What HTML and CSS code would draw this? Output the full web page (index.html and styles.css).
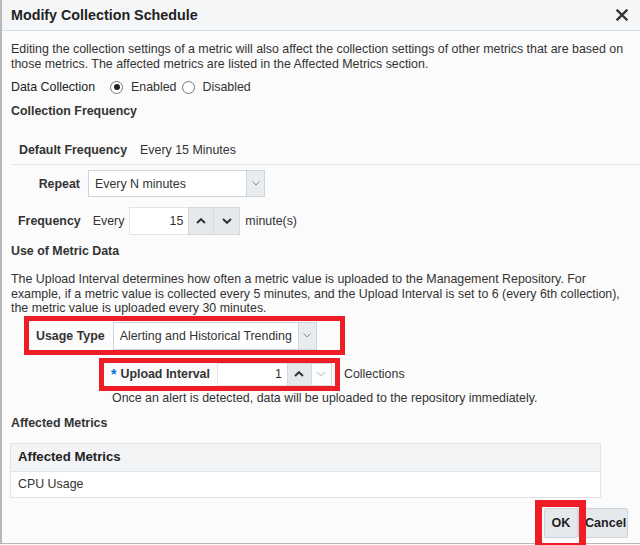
FILE: index.html
```html
<!DOCTYPE html>
<html>
<head>
<meta charset="utf-8">
<link rel="stylesheet" href="styles.css">
</head>
<body>
<div class="dialog">
  <div class="header">
    <div class="title">Modify Collection Schedule</div>
    <svg class="close" width="12" height="12" viewBox="0 0 12 12"><path d="M1.5 1.5 L10.5 10.5 M10.5 1.5 L1.5 10.5" stroke="#333" stroke-width="2.4" stroke-linecap="square"/></svg>
  </div>
  <div class="content">
    <p class="para intro">Editing the collection settings of a metric will also affect the collection settings of other metrics that are based on those metrics. The affected metrics are listed in the Affected Metrics section.</p>
    <div class="row dc">
      <span class="dc-label">Data Collection</span>
      <span class="radio on"></span><span class="rlabel">Enabled</span>
      <span class="radio"></span><span class="rlabel">Disabled</span>
    </div>
    <div class="row section">Collection Frequency</div>
    <div class="row deffreq">
      <span class="bold">Default Frequency</span>
      <span class="defval">Every 15 Minutes</span>
    </div>
    <div class="row repeat">
      <span class="bold lab">Repeat</span>
      <div class="select sel-repeat">
        <span class="sel-text">Every N minutes</span>
        <span class="sel-btn"><svg width="8" height="5" viewBox="0 0 8 5"><path d="M0.5 0.5 L4 4 L7.5 0.5" fill="none" stroke="#8a8a8a" stroke-width="1"/></svg></span>
      </div>
    </div>
    <div class="row freq">
      <span class="bold lab-freq">Frequency</span>
      <span class="every">Every</span>
      <div class="spin">
        <span class="spin-input">15</span>
        <span class="spin-btn"><svg width="10" height="6" viewBox="0 0 10 6"><path d="M1 5 L5 1.2 L9 5" fill="none" stroke="#333" stroke-width="2"/></svg></span>
        <span class="spin-btn"><svg width="10" height="6" viewBox="0 0 10 6"><path d="M1 1 L5 4.8 L9 1" fill="none" stroke="#333" stroke-width="2"/></svg></span>
      </div>
      <span class="unit">minute(s)</span>
    </div>
    <div class="row section">Use of Metric Data</div>
    <p class="para upload">The Upload Interval determines how often a metric value is uploaded to the Management Repository. For example, if a metric value is collected every 5 minutes, and the Upload Interval is set to 6 (every 6th collection), the metric value is uploaded every 30 minutes.</p>
    <div class="row usage">
      <span class="bold lab-usage">Usage Type</span>
      <div class="select sel-usage">
        <span class="sel-text">Alerting and Historical Trending</span>
        <span class="sel-btn"><svg width="8" height="5" viewBox="0 0 8 5"><path d="M0.5 0.5 L4 4 L7.5 0.5" fill="none" stroke="#8a8a8a" stroke-width="1"/></svg></span>
      </div>
    </div>
    <div class="row interval">
      <span class="req">*</span><span class="bold">Upload Interval</span>
      <div class="spin spin-small">
        <span class="spin-input">1</span>
        <span class="spin-btn"><svg width="10" height="6" viewBox="0 0 10 6"><path d="M1 5 L5 1.2 L9 5" fill="none" stroke="#333" stroke-width="2"/></svg></span>
        <span class="spin-btn disabled"><svg width="10" height="6" viewBox="0 0 10 6"><path d="M1 1 L5 4.8 L9 1" fill="none" stroke="#cfd3d6" stroke-width="1.4"/></svg></span>
      </div>
      <span class="unit">Collections</span>
    </div>
    <div class="note">Once an alert is detected, data will be uploaded to the repository immediately.</div>
    <div class="row section aff">Affected Metrics</div>
    <div class="table">
      <div class="th">Affected Metrics</div>
      <div class="td">CPU Usage</div>
    </div>
    <div class="buttons">
      <span class="btn btn-ok">OK</span>
      <span class="btn btn-cancel">Cancel</span>
    </div>
  </div>
  <div class="mark mark-usage"></div>
  <div class="mark mark-interval"></div>
  <div class="mark mark-ok"></div>
</div>
</body>
</html>
```
FILE: styles.css
```css
* { box-sizing: border-box; }
html, body { margin: 0; padding: 0; }
body {
  width: 640px;
  height: 545px;
  overflow: hidden;
  font-family: "Liberation Sans", Arial, sans-serif;
  font-size: 12.4px;
  color: #333;
  background: #fbfbfb;
}
.dialog {
  position: relative;
  width: 640px;
  height: 544px;
  border-left: 2px solid #b8b8b8;
  border-bottom: 1px solid #b8b8b8;
  background: #fbfbfb;
}
.header {
  height: 31px;
  background: #f5f6f7;
  border-bottom: 1px solid #d6dde3;
  display: flex;
  align-items: center;
  justify-content: space-between;
  padding: 0 12px 0 9px;
}
.title {
  font-weight: bold;
  font-size: 14.3px;
  color: #1f1f1f;
  padding-bottom: 1px;
}
.close { display: block; margin-top: -1px; }
.content { padding: 0 0 0 9px; }
.para { margin: 0; line-height: 14.5px; }
.intro { margin-top: 11px; width: 620px; }
.row { display: flex; align-items: center; }
.bold { font-weight: bold; }
.dc { height: 20px; margin-top: 6px; }
.dc-label { margin-right: 15px; color: #222; }
.radio {
  width: 13px; height: 13px;
  border: 1px solid #777;
  border-radius: 50%;
  background: #fff;
  position: relative;
  margin-right: 8px;
}
.radio.on::after {
  content: "";
  position: absolute;
  left: 2.5px; top: 2.5px;
  width: 6px; height: 6px;
  border-radius: 50%;
  background: #222;
}
.rlabel { margin-right: 5px; }
.section { font-weight: bold; height: 20px; margin-top: 4px; }
.deffreq {
  height: 30px;
  margin-top: 14px;
  padding-left: 7px;
  border-bottom: 1px solid #dfe4e8;
  margin-left: 1px;
}
.defval { margin-left: 13px; }
.repeat { margin-top: 5px; height: 27px; }
.lab { width: 69px; text-align: right; margin-right: 8px; }
.select {
  display: flex;
  height: 27px;
  background: #fff;
  border: 1px solid #cdd5dc;
}
.sel-text { flex: 1; padding-left: 6px; display: flex; align-items: center; }
.sel-btn {
  width: 18px;
  background: #e9ecee;
  border-left: 1px solid #cdd5dc;
  display: flex; align-items: center; justify-content: center;
}
.sel-repeat { width: 177px; }
.freq { margin-top: 10px; height: 28px; }
.lab-freq { margin-left: 7px; }
.every { margin-left: 12px; margin-right: 5px; }
.spin { display: flex; height: 28px; }
.spin-input {
  width: 59px;
  background: #fff;
  border: 1px solid #e1e5e8;
  border-right: none;
  display: flex; align-items: center; justify-content: flex-end;
  padding-right: 5px;
}
.spin-btn {
  width: 26px;
  background: #e6e9ec;
  border: 1px solid #d1d8de;
  display: flex; align-items: center; justify-content: center;
}
.spin-btn + .spin-btn { border-left: none; }
.unit { margin-left: 5px; }
.freq + .section { margin-top: 6px; }
.upload { margin-top: 11px; width: 625px; }
.usage { margin-top: 6px; height: 28px; padding-left: 25px; }
.lab-usage { margin-right: 8px; }
.sel-usage { width: 204px; height: 28px; }
.interval { margin-top: 13px; height: 23px; padding-left: 100px; }
.req { color: #0572ce; font-weight: bold; margin-right: 4px; font-size: 14px; }
.interval .spin { margin-left: 7px; height: 23px; }
.spin-small .spin-input { width: 70px; }
.spin-small .spin-btn { width: 25px; }
.spin-btn.disabled { background: #fff; width: 20px; }
.interval .unit { margin-left: 12px; }
.note { margin-top: 4px; line-height: 16px; padding-left: 101px; }
.aff { margin-top: 7px; }
.table {
  margin-top: 10px;
  margin-left: -1px;
  width: 591px;
  border: 1px solid #e0e5e9;
}
.th {
  height: 28px;
  background: #f3f4f6;
  border-bottom: 1px solid #e0e5e9;
  font-weight: bold;
  font-size: 13.2px;
  display: flex; align-items: center;
  padding-left: 7px;
  padding-bottom: 1px;
  color: #222;
}
.td {
  height: 25px;
  background: #fff;
  display: flex; align-items: center;
  padding-left: 7px;
}
.buttons {
  display: flex;
  justify-content: flex-end;
  margin-top: 10px;
  padding-right: 12px;
}
.btn {
  height: 30px;
  background: #e6e9ec;
  border: 1px solid #ccd4da;
  border-radius: 2px;
  font-weight: bold;
  font-size: 12.6px;
  color: #1f1f1f;
  display: flex; align-items: center;
}
.btn-ok { width: 34px; justify-content: center; }
.btn-cancel { width: 50px; padding-left: 6px; }
.mark {
  position: absolute;
  border: 5px solid #ee1c25;
}
.mark-usage { left: 22px; top: 316px; width: 321px; height: 39px; }
.mark-interval { left: 97px; top: 358px; width: 241px; height: 33px; }
.mark-ok { left: 533px; top: 500px; width: 51px; height: 50px; border-width: 7px; }
```
